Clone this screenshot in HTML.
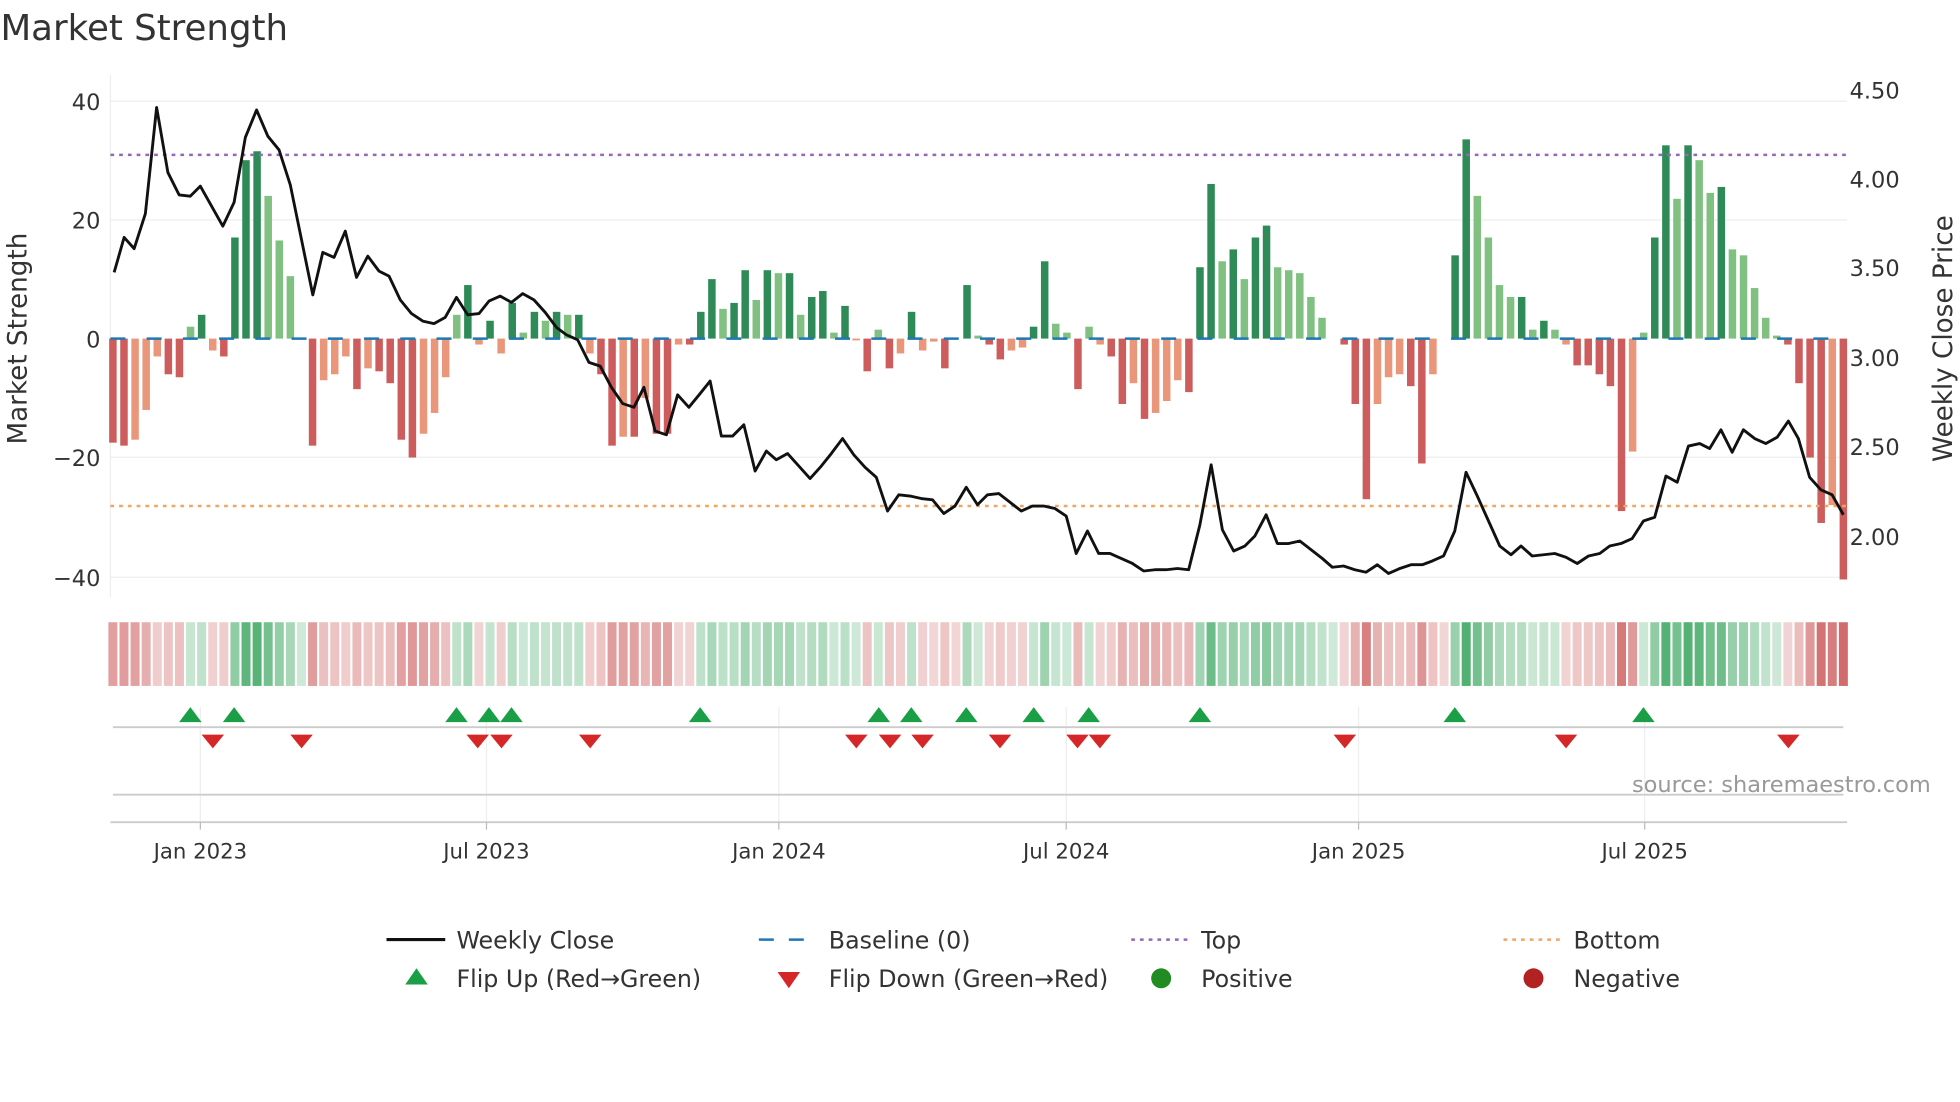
<!DOCTYPE html>
<html><head><meta charset="utf-8">
<style>html,body{margin:0;padding:0;background:#fff;width:1960px;height:1102px;overflow:hidden}
text{font-family:"DejaVu Sans","Liberation Sans",sans-serif}</style></head>
<body>
<svg id="s" width="1960" height="1102" viewBox="0 0 1568 882" xmlns="http://www.w3.org/2000/svg">
<rect width="1568" height="882" fill="#fff"/>
<text x="0" y="32" font-size="28.5" fill="#333">Market Strength</text>
<g stroke="#eeeeee" stroke-width="1">
<line x1="88" y1="81" x2="1478" y2="81"/><line x1="88" y1="176" x2="1478" y2="176"/>
<line x1="88" y1="366" x2="1478" y2="366"/><line x1="88" y1="462" x2="1478" y2="462"/>
<line x1="88" y1="60" x2="88" y2="478"/>
</g>
<g font-size="18" fill="#333" text-anchor="end">
<text x="80" y="88">40</text><text x="80" y="183">20</text><text x="80" y="278">0</text>
<text x="80" y="373">−20</text><text x="80" y="469">−40</text></g>
<g font-size="18" fill="#333">
<text x="1480" y="79">4.50</text><text x="1480" y="150">4.00</text><text x="1480" y="221">3.50</text>
<text x="1480" y="293">3.00</text><text x="1480" y="364">2.50</text><text x="1480" y="436">2.00</text></g>
<text transform="translate(21,271) rotate(-90)" font-size="21" fill="#333" text-anchor="middle">Market Strength</text>
<text transform="translate(1562,271) rotate(-90)" font-size="21" fill="#333" text-anchor="middle">Weekly Close Price</text>
<g id="bars"></g>
<line x1="88" y1="271" x2="1478" y2="271" stroke="#1f77b4" stroke-width="2" stroke-dasharray="12,17"/>
<line x1="88" y1="124" x2="1478" y2="124" stroke="#9467bd" stroke-width="2" stroke-dasharray="3,4"/>
<line x1="88" y1="405" x2="1478" y2="405" stroke="#f4a460" stroke-width="2" stroke-dasharray="3,4"/>
<polyline id="price" fill="none" stroke="#111" stroke-width="2.3" stroke-linejoin="round"/>
<g id="strip"></g>
<g stroke="#eeeeee"><line x1="160" y1="566" x2="160" y2="658"/><line x1="389" y1="566" x2="389" y2="658"/><line x1="623" y1="566" x2="623" y2="658"/><line x1="853" y1="566" x2="853" y2="658"/><line x1="1087" y1="566" x2="1087" y2="658"/><line x1="1316" y1="566" x2="1316" y2="658"/></g>
<line x1="90" y1="582" x2="1475" y2="582" stroke="#ccc" stroke-width="1.5"/>
<line x1="90" y1="636" x2="1475" y2="636" stroke="#ccc" stroke-width="1.5"/>
<line x1="88" y1="658" x2="1478" y2="658" stroke="#ccc" stroke-width="1.5"/>
<g stroke="#bbb"><line x1="160" y1="658" x2="160" y2="664"/><line x1="389" y1="658" x2="389" y2="664"/><line x1="623" y1="658" x2="623" y2="664"/><line x1="853" y1="658" x2="853" y2="664"/><line x1="1087" y1="658" x2="1087" y2="664"/><line x1="1316" y1="658" x2="1316" y2="664"/></g>
<g id="mk"></g>
<text x="1545" y="634" font-size="18" fill="#999" text-anchor="end">source: sharemaestro.com</text>
<g font-size="17" fill="#333" text-anchor="middle">
<text x="160" y="687">Jan 2023</text><text x="389" y="687">Jul 2023</text><text x="623" y="687">Jan 2024</text>
<text x="853" y="687">Jul 2024</text><text x="1087" y="687">Jan 2025</text><text x="1316" y="687">Jul 2025</text></g>
<g font-size="19" fill="#333">
<line x1="309" y1="752" x2="356" y2="752" stroke="#111" stroke-width="2.5"/><text x="365" y="759">Weekly Close</text>
<line x1="607" y1="752" x2="654" y2="752" stroke="#1f77b4" stroke-width="2" stroke-dasharray="12,12"/><text x="663" y="759">Baseline (0)</text>
<line x1="905" y1="752" x2="952" y2="752" stroke="#9467bd" stroke-width="2" stroke-dasharray="3,4"/><text x="961" y="759">Top</text>
<line x1="1203" y1="752" x2="1250" y2="752" stroke="#f4a460" stroke-width="2" stroke-dasharray="3,4"/><text x="1259" y="759">Bottom</text>
<path d="M324,788 L333,775 L342,788 Z" fill="#1a9e46"/><text x="365" y="790">Flip Up (Red→Green)</text>
<path d="M622,778 L631,791 L640,778 Z" fill="#d62728"/><text x="663" y="790">Flip Down (Green→Red)</text>
<circle cx="929" cy="783" r="8" fill="#228b22"/><text x="961" y="790">Positive</text>
<circle cx="1227" cy="783" r="8" fill="#b22222"/><text x="1259" y="790">Negative</text>
</g>
</svg>
<script>
var v=[-17.5,-18,-17,-12,-3,-6,-6.5,2,4,-2,-3,17,30,31.5,24,16.5,10.5,0,-18,-7,-6,-3,-8.5,-5,-5.5,-7.5,-17,-20,-16,-12.5,-6.5,4,9,-1,3,-2.5,6,1,4.5,3,4.5,4,4,-2.5,-6,-18,-16.5,-16.5,-10,-16,-16,-1,-1,4.5,10,5,6,11.5,6.5,11.5,11,11,4,7,8,1,5.5,-0.3,-5.5,1.5,-5,-2.5,4.5,-2,-0.5,-5,0,9,0.5,-1,-3.5,-2,-1.5,2,13,2.5,1,-8.5,2,-1,-3,-11,-7.5,-13.5,-12.5,-10.5,-7,-9,12,26,13,15,10,17,19,12,11.5,11,7,3.5,0,-1,-11,-27,-11,-6.5,-6,-8,-21,-6,0,14,33.5,24,17,9,7,7,1.5,3,1.5,-1,-4.5,-4.5,-6,-8,-29,-19,1,17,32.5,23.5,32.5,30,24.5,25.5,15,14,8.5,3.5,0.5,-1,-7.5,-20,-31,-28,-40.5];
var NS="http://www.w3.org/2000/svg";
function el(p,t,a){var e=document.createElementNS(NS,t);for(var k in a)e.setAttribute(k,a[k]);document.getElementById(p).appendChild(e);}
var step=(1475-90)/156, reg=-1;
for(var i=0;i<v.length;i++){var x=90+i*step,y=v[i],p=i?v[i-1]:y;
 var strong=Math.abs(y)>=Math.abs(p)-0.01;var c;
 if(y>=0)c=strong?"#2e8b57":"#80c080";else c=strong?"#cd5c5c":"#e9967a";
 var h=Math.abs(y)*4.76;
 if(h>0.5)el("bars","rect",{x:x-3,y:y>=0?271-h:271,width:6,height:h,fill:c});
 if(y>0.4)reg=1;else if(y<-0.4)reg=-1;
 var a=0.25+0.65*Math.min(Math.abs(y)/33,1);
 el("strip","rect",{x:x-3.6,y:498,width:7.2,height:51,fill:reg>0?"#3fa863":"#cd5c5c","fill-opacity":a.toFixed(2)});}
var pts="91,218 99,190 107,199 116,171 125,86 134,138 143,156 152,157 160,149 169,165 178,181 187,162 196,110 205,88 214,109 223,120 232,148 241,192 250,236 258,202 267,206 276,185 285,222 294,205 303,217 311,221 320,240 329,251 338,257 347,259 356,254 365,238 374,252 383,251 391,241 400,237 409,242 418,235 427,240 436,250 445,262 453,268 462,272 471,290 480,293 489,310 498,323 507,326 515,310 524,345 533,348 542,316 551,326 560,315 568,305 577,349 586,349 595,340 604,377 613,361 621,368 630,363 639,373 648,383 657,373 665,363 674,351 683,364 692,374 701,382 710,409 719,396 728,397 737,399 746,400 755,411 764,405 773,390 782,404 790,396 799,395 808,402 817,409 826,405 835,405 844,407 853,413 861,443 870,425 879,443 888,443 897,447 906,451 915,457 924,456 933,456 942,455 951,456 960,420 969,372 978,424 987,441 996,437 1004,429 1013,412 1022,435 1031,435 1040,433 1049,440 1058,447 1066,454 1075,453 1084,456 1093,458 1102,452 1111,459 1120,455 1129,452 1138,452 1146,449 1155,445 1164,425 1173,378 1182,397 1191,417 1200,437 1209,444 1217,437 1226,445 1235,444 1244,443 1253,446 1262,451 1271,445 1280,443 1288,437 1297,435 1306,431 1315,417 1324,414 1333,381 1342,386 1351,357 1360,355 1368,359 1377,344 1386,362 1395,344 1404,351 1413,355 1422,350 1431,337 1439,351 1448,382 1457,392 1466,396 1475,412";
document.getElementById("price").setAttribute("points",pts);
[152,187,365,391,409,560,703,729,773,827,871,960,1164,1315].forEach(function(x){el("mk","path",{d:"M"+(x-9)+",578 L"+x+",566 L"+(x+9)+",578 Z",fill:"#1a9e46"});});
[170,241,382,401,472,685,712,738,800,862,880,1076,1253,1431].forEach(function(x){el("mk","path",{d:"M"+(x-9)+",588 L"+x+",599 L"+(x+9)+",588 Z",fill:"#d62728"});});
</script>
</body></html>
